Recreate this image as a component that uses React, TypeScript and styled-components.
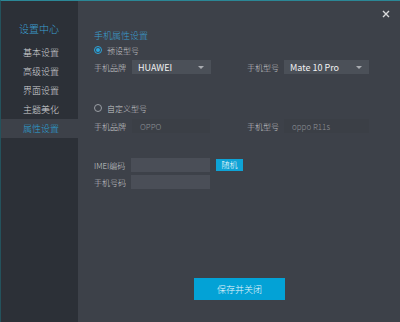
import React from 'react';
import styled, { createGlobalStyle } from 'styled-components';

const GlobalStyle = createGlobalStyle`
  html, body {
    margin: 0;
    padding: 0;
    background: #3d4149;
  }
  body {
    font-family: "Noto Sans CJK SC", "Noto Sans", sans-serif;
    font-weight: 300;
  }
`;

const Window = styled.div`
  display: flex;
  width: 400px;
  height: 322px;
  box-sizing: border-box;
  border-top: 1px solid #2b8796;
  border-left: 1px solid #24525c;
  background: #3d4149;
  overflow: hidden;
`;

const Sidebar = styled.nav`
  width: 77px;
  flex-shrink: 0;
  display: flex;
  flex-direction: column;
  background: #2c3037;
`;

const SideTitle = styled.div`
  margin: 20px 0 0 18px;
  height: 15px;
  line-height: 15px;
  font-size: 10px;
  color: #3b9fd0;
`;

const SideList = styled.ul`
  list-style: none;
  margin: 7px 0 0;
  padding: 0;
`;

const SideItem = styled.li<{ $active?: boolean }>`
  height: 19px;
  line-height: 19px;
  padding-left: 22px;
  font-size: 9px;
  color: ${(p) => (p.$active ? '#2ba3d8' : '#d4d5d7')};
  background: ${(p) => (p.$active ? '#3d4149' : 'transparent')};
  margin-right: ${(p) => (p.$active ? '-1px' : '0')};
`;

const Main = styled.main`
  flex: 1;
  display: flex;
  flex-direction: column;
  padding-left: 16px;
`;

const TopBar = styled.div`
  height: 26px;
  display: flex;
  justify-content: flex-end;
  align-items: center;
  padding-right: 8px;
`;

const CloseButton = styled.button`
  width: 12px;
  height: 12px;
  padding: 0;
  border: none;
  background: none;
  display: flex;
  align-items: center;
  justify-content: center;
  cursor: pointer;
`;

const SectionTitle = styled.div`
  margin-top: 3px;
  height: 12px;
  line-height: 12px;
  font-size: 9px;
  color: #3a9fd0;
`;

const RadioRow = styled.label<{ $top: number }>`
  margin-top: ${(p) => p.$top}px;
  height: 12px;
  display: flex;
  align-items: center;
  gap: 5px;
  font-size: 8px;
  color: #c9cacd;
`;

const RadioDot = styled.span<{ $checked?: boolean }>`
  width: 8px;
  height: 8px;
  box-sizing: border-box;
  border-radius: 50%;
  border: 1px solid ${(p) => (p.$checked ? '#2aa6de' : '#9a9ea4')};
  display: flex;
  align-items: center;
  justify-content: center;

  &::after {
    content: '';
    width: 4px;
    height: 4px;
    border-radius: 50%;
    background: ${(p) => (p.$checked ? '#2aa6de' : 'transparent')};
  }
`;

const FieldRow = styled.div<{ $top: number }>`
  margin-top: ${(p) => p.$top}px;
  display: flex;
  align-items: center;
  height: 14px;
`;

const Label = styled.span<{ $width: number }>`
  width: ${(p) => p.$width}px;
  flex-shrink: 0;
  font-size: 8px;
  color: #c9cacd;
`;

const Select = styled.div<{ $width: number }>`
  width: ${(p) => p.$width}px;
  height: 14px;
  box-sizing: border-box;
  padding: 0 7px 0 6px;
  display: flex;
  align-items: center;
  justify-content: space-between;
  background: #4b5058;
  font-size: 9px;
  font-weight: 400;
  color: #f1f1f2;
`;

const Caret = styled.span`
  width: 0;
  height: 0;
  border-left: 3px solid transparent;
  border-right: 3px solid transparent;
  border-top: 3px solid #a9acb1;
`;

const Input = styled.div<{ $width: number; $muted?: boolean }>`
  width: ${(p) => p.$width}px;
  height: 14px;
  box-sizing: border-box;
  padding-left: 8px;
  display: flex;
  align-items: center;
  font-size: 8px;
  color: #8e9196;
  background: ${(p) => (p.$muted ? '#3b3f46' : '#4a4e57')};
`;

const Gap = styled.div<{ $width: number }>`
  width: ${(p) => p.$width}px;
  flex-shrink: 0;
`;

const SmallButton = styled.button`
  margin-left: 6px;
  width: 27px;
  height: 12px;
  padding: 0;
  border: none;
  background: #0ea3d6;
  color: #ffffff;
  font-family: inherit;
  font-weight: 300;
  font-size: 8px;
  line-height: 12px;
`;

const Spacer = styled.div`
  flex: 1;
`;

const Footer = styled.div`
  display: flex;
  padding-left: 100px;
  margin-bottom: 22px;
`;

const PrimaryButton = styled.button`
  width: 91px;
  height: 22px;
  padding: 0;
  border: none;
  background: #03a2d6;
  color: #e9f6fb;
  font-family: inherit;
  font-weight: 300;
  font-size: 9px;
`;

const menu = ['基本设置', '高级设置', '界面设置', '主题美化', '属性设置'];

function App(): JSX.Element {
  return (
    <>
      <GlobalStyle />
      <Window>
        <Sidebar>
          <SideTitle>设置中心</SideTitle>
          <SideList>
            {menu.map((m) => (
              <SideItem key={m} $active={m === '属性设置'}>
                {m}
              </SideItem>
            ))}
          </SideList>
        </Sidebar>
        <Main>
          <TopBar>
            <CloseButton aria-label="close">
              <svg width="8" height="8" viewBox="0 0 8 8">
                <path d="M1 1 L7 7 M7 1 L1 7" stroke="#d9dadc" strokeWidth="1.4" />
              </svg>
            </CloseButton>
          </TopBar>
          <SectionTitle>手机属性设置</SectionTitle>
          <RadioRow $top={2}>
            <RadioDot $checked />
            预设型号
          </RadioRow>
          <FieldRow $top={4}>
            <Label $width={38}>手机品牌</Label>
            <Select $width={79}>
              HUAWEI
              <Caret />
            </Select>
            <Gap $width={36} />
            <Label $width={37}>手机型号</Label>
            <Select $width={85}>
              Mate 10 Pro
              <Caret />
            </Select>
          </FieldRow>
          <RadioRow $top={28}>
            <RadioDot />
            自定义型号
          </RadioRow>
          <FieldRow $top={5}>
            <Label $width={38}>手机品牌</Label>
            <Input $width={78} $muted>OPPO</Input>
            <Gap $width={37} />
            <Label $width={37}>手机型号</Label>
            <Input $width={85} $muted>oppo R11s</Input>
          </FieldRow>
          <FieldRow $top={25}>
            <Label $width={37}>IMEI编码</Label>
            <Input $width={79} />
            <SmallButton>随机</SmallButton>
          </FieldRow>
          <FieldRow $top={3}>
            <Label $width={37}>手机号码</Label>
            <Input $width={79} />
          </FieldRow>
          <Spacer />
          <Footer>
            <PrimaryButton>保存并关闭</PrimaryButton>
          </Footer>
        </Main>
      </Window>
    </>
  );
}

export default App;
